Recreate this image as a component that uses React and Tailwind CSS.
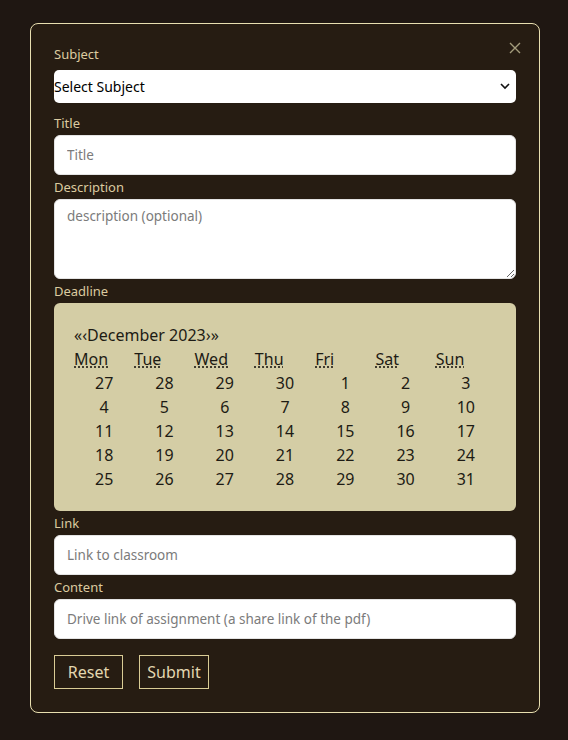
import React from 'react';

const WEEKDAYS = [
  ['Mon', 'Monday'], ['Tue', 'Tuesday'], ['Wed', 'Wednesday'], ['Thu', 'Thursday'],
  ['Fri', 'Friday'], ['Sat', 'Saturday'], ['Sun', 'Sunday'],
];

const WEEKS = [
  [27, 28, 29, 30, 1, 2, 3],
  [4, 5, 6, 7, 8, 9, 10],
  [11, 12, 13, 14, 15, 16, 17],
  [18, 19, 20, 21, 22, 23, 24],
  [25, 26, 27, 28, 29, 30, 31],
];

const Label = ({ children, className = '' }) => (
  <p className={`h-5 text-[13px] leading-5 text-[#dccba0] ${className}`}>{children}</p>
);

const inputClass =
  'block w-full h-10 rounded-md bg-white border border-[#e4e4e4] px-[12px] text-[13.5px] text-black placeholder:text-[#7b7b7b] outline-none';

function Calendar() {
  return (
    <div className="rounded-md bg-[#d4cda5] p-5 text-[16px] text-[#1d1b14]">
      <div className="h-6 leading-6">
        <span>«‹</span>December 2023<span>›»</span>
      </div>
      <div className="grid grid-cols-7">
        {WEEKDAYS.map(([short, full]) => (
          <div key={short} className="h-6 leading-6">
            <abbr title={full} className="underline decoration-dotted underline-offset-2">{short}</abbr>
          </div>
        ))}
        {WEEKS.flat().map((d, i) => (
          <div key={i} className="h-6 leading-6 text-center">{d}</div>
        ))}
      </div>
    </div>
  );
}

export default function App() {
  return (
    <div className="min-h-[740px] bg-[#1f1712] pt-[23px] pl-[30px]" style={{ fontFamily: '"Noto Sans", sans-serif' }}>
      <div className="relative w-[510px] rounded-lg border border-[#e8dfb0] bg-[#261c12] px-[23px] pt-5 pb-[23px]">
        <button className="absolute right-[17px] top-[17px] text-[#a49c7c]" aria-label="Close">
          <svg width="14" height="14" viewBox="0 0 14 14" fill="none" stroke="currentColor" strokeWidth="1.4">
            <path d="M2 2l10 10M12 2L2 12" />
          </svg>
        </button>

        <Label className="mb-[6px]">Subject</Label>
        <div className="relative h-[33px] rounded-[5px] bg-white">
          <select className="h-full w-full appearance-none bg-transparent text-[14px] text-black outline-none">
            <option>Select Subject</option>
          </select>
          <svg className="pointer-events-none absolute right-[6px] top-[13px]" width="10" height="7" viewBox="0 0 10 7" fill="none" stroke="#111" strokeWidth="1.6">
            <path d="M1 1l4 4 4-4" />
          </svg>
        </div>

        <Label className="mt-[10px] mb-[2px]">Title</Label>
        <input className={inputClass} placeholder="Title" />

        <Label className="my-[2px]">Description</Label>
        <textarea
          className="block h-20 w-full rounded-md bg-white border border-[#e4e4e4] px-[12px] py-[6px] text-[13.5px] placeholder:text-[#7b7b7b] outline-none"
          placeholder="description (optional)"
        />

        <Label className="my-[2px]">Deadline</Label>
        <Calendar />

        <Label className="my-[2px]">Link</Label>
        <input className={inputClass} placeholder="Link to classroom" />

        <Label className="my-[2px]">Content</Label>
        <input className={inputClass} placeholder="Drive link of assignment (a share link of the pdf)" />

        <div className="mt-4 flex gap-4">
          <button className="h-[34px] w-[69px] border border-[#d9cc95] text-[16px] text-[#e3d7b0]">Reset</button>
          <button className="h-[34px] w-[70px] border border-[#d9cc95] text-[16px] text-[#e3d7b0]">Submit</button>
        </div>
      </div>
    </div>
  );
}
